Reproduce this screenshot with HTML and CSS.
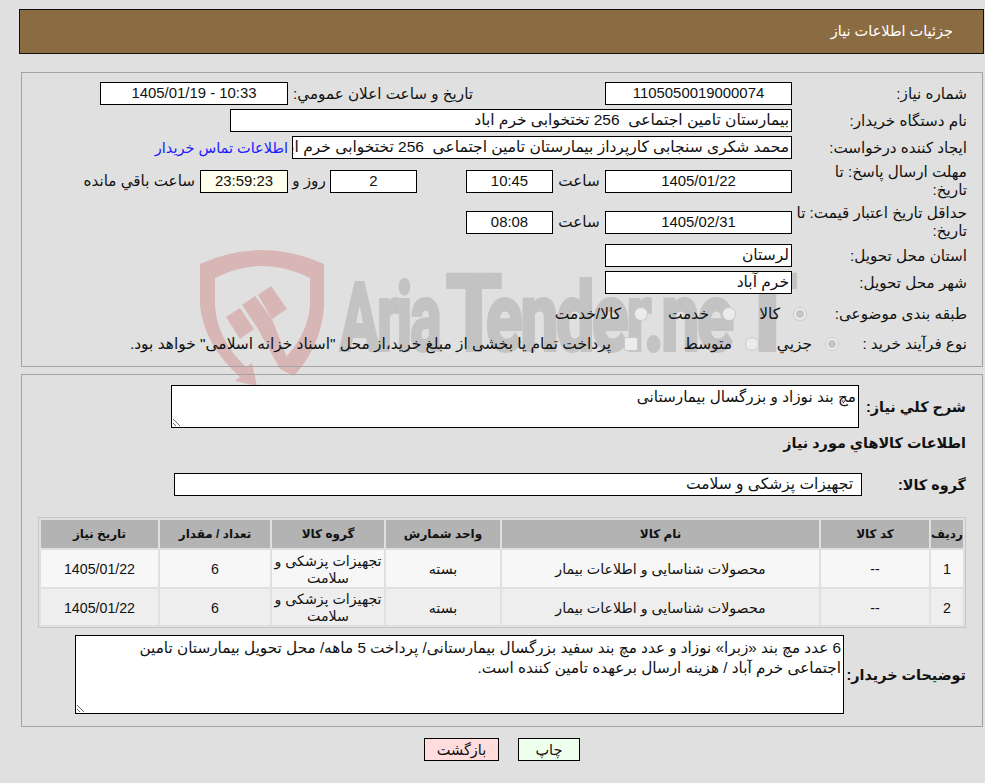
FILE: index.html
```html
<!DOCTYPE html>
<html lang="fa" dir="rtl">
<head>
    <meta charset="UTF-8">
    <title>جزئیات اطلاعات نیاز</title>
    <link rel="stylesheet" href="styles.css">
</head>
<body>
    <div class="page">
        <svg class="watermark" width="985" height="400" viewBox="0 0 985 400" aria-hidden="true">
            <path class="wm-red" fill-rule="evenodd" d="M200 264 Q262 236 324 264 L324 305 Q322 345 294 376 L283 360 Q308 335 310 305 L310 278 Q262 254 215 278 L215 305 Q217 340 246 367 L252 363 L257 386 L235 381 L240 377 Q204 345 200 305 Z"/>
            <polygon class="wm-red" points="226,317 240,308 254,329 240,339"/>
            <polygon class="wm-red" points="242,305 255,296 272,319 258,329"/>
            <polygon class="wm-red" points="258,295 271,286 287,309 272,319"/>
            <polygon class="wm-red" points="258,329 272,319 294,376 280,369"/>
            <text class="wm-text wm-tight" transform="translate(340 350) scale(0.62 1)">Aria</text>
            <text class="wm-text wm-cap" transform="translate(446 350) scale(0.85 1)">T</text>
            <text class="wm-text wm-tight" transform="translate(486 350) scale(0.72 1)">ender.ne</text>
            <text class="wm-text wm-cap" transform="translate(738 350) scale(0.9 1)">T</text>
        </svg>

        <h1 class="header">جزئیات اطلاعات نیاز</h1>

        <div class="panel panel-info">
            <div class="row">
                <div class="label">شماره نیاز:</div>
                <div class="field w-187 center">1105050019000074</div>
                <div class="public-label">تاریخ و ساعت اعلان عمومي:</div>
                <div class="field w-188 center">10:33 - 1405/01/19</div>
            </div>
            <div class="row">
                <div class="label">نام دستگاه خریدار:</div>
                <div class="field w-562">بیمارستان تامین اجتماعی  256 تختخوابی خرم اباد</div>
            </div>
            <div class="row">
                <div class="label">ایجاد کننده درخواست:</div>
                <div class="field w-500">محمد شکری سنجابی کارپرداز بیمارستان تامین اجتماعی  256 تختخوابی خرم اباد</div>
                <a class="contact" href="#">اطلاعات تماس خریدار</a>
            </div>
            <div class="row row-tall first-tall">
                <div class="label">مهلت ارسال پاسخ: تا<br>تاریخ:</div>
                <div class="field w-187 center">1405/01/22</div>
                <div class="at">ساعت</div>
                <div class="field w-87 center">10:45</div>
                <div class="field w-87 center days">2</div>
                <div class="days-label">روز و</div>
                <div class="field w-88 center countdown">23:59:23</div>
                <div class="remaining">ساعت باقي مانده</div>
            </div>
            <div class="row row-tall">
                <div class="label">حداقل تاریخ اعتبار قیمت: تا<br>تاریخ:</div>
                <div class="field w-187 center">1405/02/31</div>
                <div class="at">ساعت</div>
                <div class="field w-87 center">08:08</div>
            </div>
            <div class="row">
                <div class="label">استان محل تحویل:</div>
                <div class="field w-187">لرستان</div>
            </div>
            <div class="row">
                <div class="label">شهر محل تحویل:</div>
                <div class="field w-187">خرم آباد</div>
            </div>
            <div class="row row-subject">
                <div class="label label-subject">طبقه بندی موضوعی:</div>
                <div class="option w-71"><span class="radio checked"></span>کالا</div>
                <div class="option w-88"><span class="radio"></span>خدمت</div>
                <div class="option"><span class="radio"></span>کالا/خدمت</div>
            </div>
            <div class="row row-process">
                <div class="label label-process">نوع فرآیند خرید :</div>
                <div class="option w-80"><span class="radio checked"></span>جزیي</div>
                <div class="option w-121"><span class="radio"></span>متوسط</div>
                <div class="option"><span class="check"></span>پرداخت تمام یا بخشی از مبلغ خرید،از محل "اسناد خزانه اسلامی" خواهد بود.</div>
            </div>
        </div>

        <div class="panel panel-goods">
            <div class="row">
                <div class="label-bold w-107">شرح کلي نیاز:</div>
                <div class="memo memo-short">مچ بند نوزاد و بزرگسال بیمارستانی</div>
            </div>
            <h2 class="section-title">اطلاعات کالاهاي مورد نیاز</h2>
            <div class="row">
                <div class="label-bold w-104">گروه کالا:</div>
                <div class="field w-688 group-field">تجهیزات پزشکی و سلامت</div>
            </div>

            <table class="goods">
                <colgroup>
                    <col class="c-1"><col class="c-2"><col class="c-3"><col class="c-4"><col class="c-5"><col class="c-6"><col class="c-7">
                </colgroup>
                <thead>
                    <tr>
                        <th>ردیف</th>
                        <th>کد کالا</th>
                        <th>نام کالا</th>
                        <th>واحد شمارش</th>
                        <th>گروه کالا</th>
                        <th>تعداد / مقدار</th>
                        <th>تاریخ نیاز</th>
                    </tr>
                </thead>
                <tbody>
                    <tr class="odd">
                        <td>1</td>
                        <td>--</td>
                        <td>محصولات شناسایی و اطلاعات بیمار</td>
                        <td>بسته</td>
                        <td>تجهیزات پزشکی و سلامت</td>
                        <td>6</td>
                        <td>1405/01/22</td>
                    </tr>
                    <tr class="even">
                        <td>2</td>
                        <td>--</td>
                        <td>محصولات شناسایی و اطلاعات بیمار</td>
                        <td>بسته</td>
                        <td>تجهیزات پزشکی و سلامت</td>
                        <td>6</td>
                        <td>1405/01/22</td>
                    </tr>
                </tbody>
            </table>

            <div class="row row-notes">
                <div class="label-bold w-122">توضیحات خریدار:</div>
                <div class="memo memo-notes">6 عدد مچ بند «زبرا» نوزاد و عدد مچ بند سفید بزرگسال بیمارستانی/ پرداخت 5 ماهه/ محل تحویل بیمارستان تامین اجتماعی خرم آباد / هزینه ارسال برعهده تامین کننده است.</div>
            </div>
        </div>

        <div class="actions">
            <button class="btn btn-print" type="button">چاپ</button>
            <button class="btn btn-back" type="button">بازگشت</button>
        </div>
    </div>
</body>
</html>
```

FILE: styles.css
```css
* {
    margin: 0;
    padding: 0;
    box-sizing: border-box;
}

body {
    font-family: "Liberation Sans", "DejaVu Sans", sans-serif;
    font-size: 15.2px;
    color: #111;
    background-color: #e0e0e0;
}

.page {
    position: relative;
    width: 985px;
    height: 783px;
    overflow: hidden;
    padding-top: 9px;
}

/* Watermark sits behind both panels */
.watermark {
    position: absolute;
    top: 0;
    left: 0;
    direction: ltr;
}

.wm-red {
    fill: #d9b6b6;
}

.wm-text {
    font-family: Roboto, sans-serif;
    font-weight: 700;
    font-size: 94px;
    fill: #c3c3c3;
    stroke: #c3c3c3;
    stroke-width: 4px;
}

.wm-tight {
    letter-spacing: -3px;
}

.wm-cap {
    font-size: 106px;
}

.header {
    position: relative;
    width: 965px;
    height: 45px;
    margin-right: 1px;
    padding-right: 30px;
    background-color: #8b6c42;
    border: 1px solid #111;
    color: #fff;
    font-size: 14.5px;
    font-weight: 400;
    line-height: 43px;
}

.panel {
    position: relative;
    width: 962px;
    margin-right: 2px;
    border: 1px solid #a3a3a3;
}

.panel-info {
    height: 295px;
    margin-top: 18px;
    padding-top: 9px;
    padding-right: 15px;
}

.panel-goods {
    height: 353px;
    margin-top: 7px;
    padding-top: 10px;
    padding-right: 16px;
}

.row {
    display: flex;
    align-items: center;
    min-height: 23px;
    margin-bottom: 4px;
}

.row-tall {
    height: 34px;
    margin-top: 7px;
    margin-bottom: 5px;
}

.first-tall {
    margin-top: 5px;
}

.row-subject {
    margin-top: 8px;
    margin-bottom: 7px;
}

.label {
    width: 175px;
    flex-shrink: 0;
    padding-left: 2px;
    line-height: 18px;
}

.label-subject {
    width: 160px;
}

.label-process {
    width: 128px;
}

.label-bold {
    flex-shrink: 0;
    font-size: 14.4px;
    font-weight: 700;
    white-space: nowrap;
}

.field {
    height: 23px;
    flex-shrink: 0;
    padding: 0 2px;
    overflow: hidden;
    background-color: #fff;
    border: 1px solid #000;
    font-size: 15.5px;
    line-height: 20px;
    white-space: pre;
}

.center {
    font-size: 14.9px;
    text-align: center;
}

.w-187 { width: 187px; }
.w-188 { width: 188px; }
.w-562 { width: 562px; }
.w-500 { width: 500px; }
.w-88 { width: 88px; }
.w-87 { width: 87px; }
.w-688 { width: 688px; }
.w-107 { width: 107px; }
.w-104 { width: 104px; }
.w-122 { width: 122px; }
.w-71 { width: 71px; }
.w-80 { width: 80px; }
.w-121 { width: 121px; }

.public-label {
    width: 185px;
    margin-right: 132px;
    white-space: nowrap;
}

.contact {
    margin-right: 4px;
    color: #1a1aff;
    font-size: 14.5px;
    text-decoration: none;
    white-space: nowrap;
}

.at {
    width: 52px;
    text-align: center;
}

.days {
    margin-right: 49px;
}

.days-label {
    width: 42px;
    text-align: center;
    white-space: nowrap;
}

.countdown {
    background-color: #ffffee;
}

.remaining {
    margin-right: 5px;
    white-space: nowrap;
}

.option {
    display: flex;
    align-items: center;
    font-size: 15.45px;
    white-space: nowrap;
}

.radio {
    width: 14px;
    height: 14px;
    margin-left: 13px;
    flex-shrink: 0;
    border: 1px solid #c9c9c9;
    border-radius: 50%;
    background-color: #ececec;
}

.radio.checked {
    background: radial-gradient(circle, #c4c4c4 0 3.5px, #ededed 4.5px);
}

.check {
    width: 14px;
    height: 14px;
    margin-left: 13px;
    flex-shrink: 0;
    border: 1px solid #c9c9c9;
    border-radius: 2px;
    background-color: #ececec;
}

.memo {
    flex-shrink: 0;
    padding: 2px 2px 2px 30px;
    overflow: auto;
    resize: vertical;
    background-color: #fff;
    border: 1px solid #000;
    font-size: 15.25px;
}

.memo-short {
    width: 688px;
    height: 43px;
}

.memo-notes {
    width: 769px;
    height: 79px;
    line-height: 20px;
}

.section-title {
    margin-top: 5px;
    height: 40px;
    font-size: 14.4px;
    font-weight: 700;
    line-height: 20px;
}

.group-field {
    padding-right: 8px;
}

.goods {
    width: 928px;
    margin-top: 21px;
    table-layout: fixed;
    border: 1px solid #c6c6c6;
    border-collapse: separate;
    border-spacing: 2px;
}

.c-1 { width: 32px; }
.c-2 { width: 108px; }
.c-3 { width: 317px; }
.c-4 { width: 114px; }
.c-5 { width: 112px; }
.c-6 { width: 110px; }
.c-7 { width: 117px; }

.goods th {
    height: 28px;
    background-color: #b3b3b3;
    font-size: 12px;
    font-weight: 700;
}

.goods td {
    padding-top: 2px;
    font-size: 14.2px;
    text-align: center;
    line-height: 17px;
}

.odd td {
    height: 37px;
    background-color: #f7f7f7;
}

.even td {
    height: 36px;
    background-color: #eeeeee;
}

.row-notes {
    margin-top: 7px;
}

.actions {
    display: flex;
    justify-content: center;
    gap: 19px;
    width: 962px;
    margin-right: 2px;
    margin-top: 11px;
}

.btn {
    height: 23px;
    font-family: inherit;
    font-size: 14.5px;
    color: #111;
    border: 1px solid #000;
}

.btn-print {
    width: 62px;
    background-color: #eeffee;
}

.btn-back {
    width: 75px;
    background-color: #ffdddd;
}
```
